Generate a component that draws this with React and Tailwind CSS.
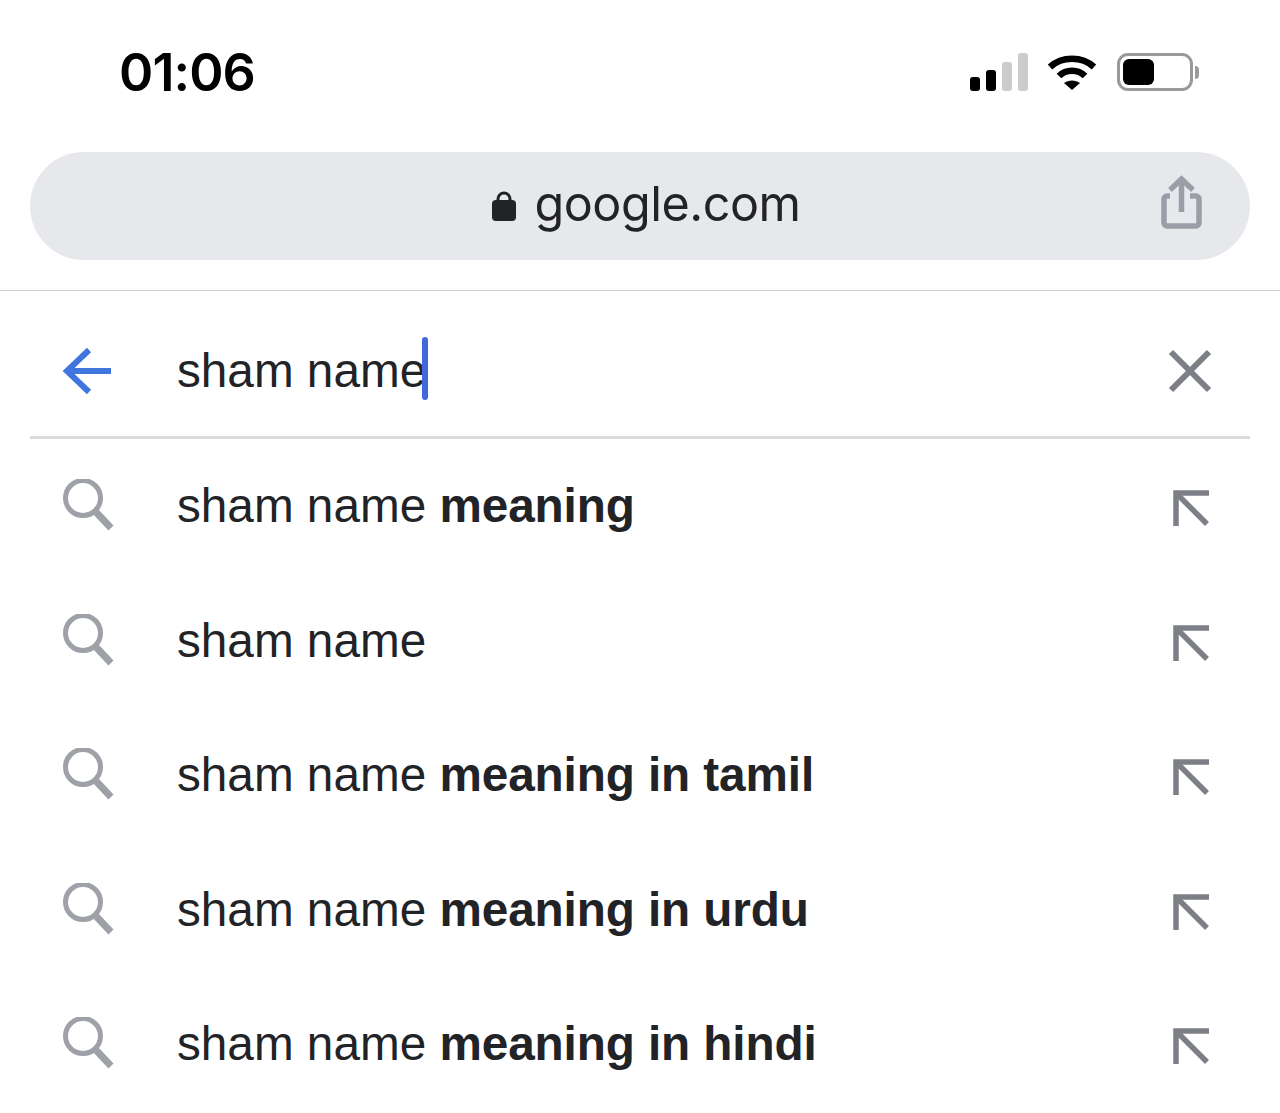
const suggestions = [
  { bold: "meaning" },
  { bold: "" },
  { bold: "meaning in tamil" },
  { bold: "meaning in urdu" },
  { bold: "meaning in hindi" },
];

function SearchIcon() {
  return (
    <svg width="54" height="54" viewBox="0 0 54 54" fill="none" stroke="#9ea1a8" strokeWidth="5">
      <circle cx="21" cy="19" r="17.5" />
      <path d="M33 32 L49 49" strokeWidth="7" />
    </svg>
  );
}

function FillArrow() {
  return (
    <svg width="36" height="36" viewBox="0 0 36 36" fill="none" stroke="#7c7f85" strokeWidth="5.5">
      <path d="M36 3 H3 V36" />
      <path d="M4 4 L34 34" />
    </svg>
  );
}

function Row({ bold }) {
  return (
    <div className="h-[134.5px] flex items-center">
      <div className="w-[177px] pl-[62px] shrink-0 flex items-center">
        <SearchIcon />
      </div>
      <div className="flex-1 text-[47.7px] text-[#222326] whitespace-pre font-['Liberation_Sans',sans-serif]">
        sham name{bold ? " " : ""}
        {bold && <span className="font-bold tracking-[-0.1px]">{bold}</span>}
      </div>
      <div className="w-[36px] mr-[71px] pt-[4px] flex items-center">
        <FillArrow />
      </div>
    </div>
  );
}

export default function App() {
  return (
    <div className="w-[1280px] h-[1113px] overflow-hidden bg-white font-['Inter',sans-serif]">
      <div className="h-[152px] flex items-center justify-between pl-[119px] pr-[81px] pb-[8px]">
        <span className="text-[52px] font-semibold text-black tracking-[-0.9px] pt-[2px]">01:06</span>
        <div className="flex items-center gap-[19px]">
          <svg width="58" height="38" viewBox="0 0 58 38">
            <rect x="0" y="24" width="10" height="14" rx="3" fill="#000" />
            <rect x="16" y="17" width="10" height="21" rx="3" fill="#000" />
            <rect x="32" y="9" width="10" height="29" rx="3" fill="#ccc" />
            <rect x="48" y="0" width="10" height="38" rx="3" fill="#ccc" />
          </svg>
          <svg width="50" height="38" viewBox="0 0 50 38" fill="none" stroke="#000" strokeWidth="6.5">
            <path d="M3 14 C15 3 35 3 47 14" />
            <path d="M12 23 C19 16 31 16 38 23" />
            <path d="M25 37 L17 30 C21 26.500 29 26.500 33 30 Z" fill="#000" stroke="none" />
          </svg>
          <div className="flex items-center gap-[2px] ml-[1px]">
            <div className="w-[76px] h-[38px] border-[3px] border-[#999] rounded-[11px] p-[3px]">
              <div className="w-[31px] h-[26px] bg-black rounded-[6px]"></div>
            </div>
            <div className="w-[4px] h-[13px] bg-[#999] rounded-r-full"></div>
          </div>
        </div>
      </div>

      <div className="mx-[30px] h-[108px] rounded-[54px] bg-[#e7e8ec] flex items-center relative">
        <div className="flex-1 flex items-center justify-center gap-[19px] pl-[12px]">
          <svg width="24" height="30" viewBox="0 0 24 30">
            <path d="M6 12 V8 a6 6 0 0 1 12 0 V12" fill="none" stroke="#222327" strokeWidth="3" />
            <rect x="0" y="9" width="24" height="21" rx="4" fill="#222327" />
          </svg>
          <span className="text-[48.5px] leading-none tracking-[-0.5px] text-[#222327] pb-[4px]">google.com</span>
        </div>
        <svg className="absolute right-[46px] top-[23px]" width="44" height="54" viewBox="0 0 44 54" fill="none" stroke="#9a9ea6" strokeWidth="5.5">
          <path d="M10 21 H7 a3 3 0 0 0 -3 3 V48 a3 3 0 0 0 3 3 H36 a3 3 0 0 0 3 -3 V24 a3 3 0 0 0 -3 -3 H30" />
          <path d="M21.500 37 V4" />
          <path d="M10 15 L21.500 4 L33 15" />
        </svg>
      </div>

      <div className="h-[31px] border-b border-[#cfcfd1]"></div>

      <div className="h-[145px] flex items-center pt-[15px]">
        <div className="w-[177px] pl-[62px] shrink-0">
          <svg width="50" height="48" viewBox="0 0 50 48" fill="none" stroke="#3f76de" strokeWidth="6">
            <path d="M4 24 H49" />
            <path d="M27 3 L5 24 L27 45" />
          </svg>
        </div>
        <div className="flex-1 flex items-center text-[47.7px] text-[#222326] font-['Liberation_Sans',sans-serif]">
          <span>sham name</span>
          <span className="w-[6px] h-[63px] bg-[#4169dc] rounded-full ml-[-4px] mb-[4px]"></span>
        </div>
        <svg className="mr-[68px]" width="44" height="44" viewBox="0 0 44 44" fill="none" stroke="#7c7f85" strokeWidth="6">
          <path d="M3 3 L41 41" />
          <path d="M41 3 L3 41" />
        </svg>
      </div>

      <div className="mx-[30px] h-[3px] bg-[#dcdcde]"></div>

      {suggestions.map((s, i) => (
        <Row key={i} bold={s.bold} />
      ))}
    </div>
  );
}
